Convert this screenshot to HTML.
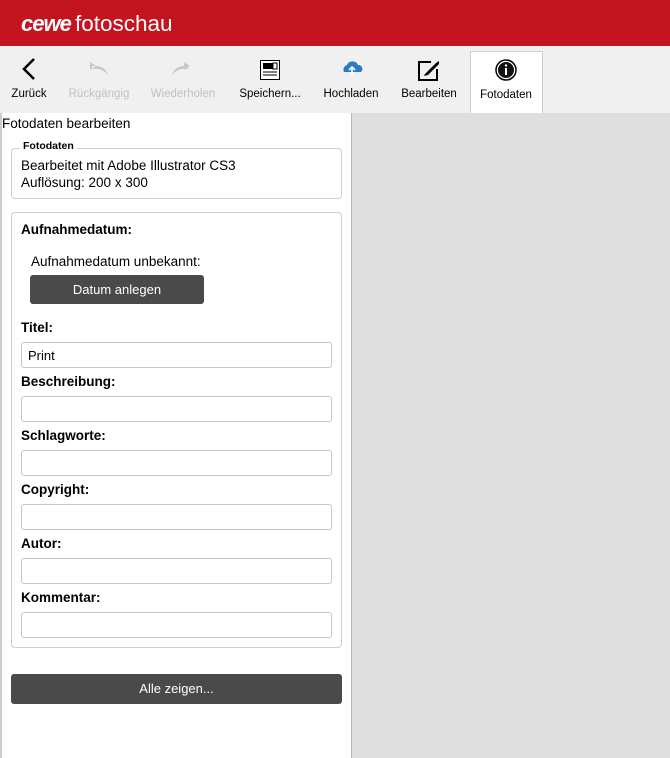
<!DOCTYPE html>
<html><head><meta charset="utf-8"><style>
*{box-sizing:border-box;margin:0;padding:0}
body{width:670px;height:758px;overflow:hidden;background:#dedede;font-family:"Liberation Sans",Arial,sans-serif;color:#000;position:relative}
.a{position:absolute}
#hdr{left:0;top:0;width:670px;height:46px;background:#c4141f}
#tb{left:0;top:46px;width:670px;height:67px;background:#f0f0f0}
.tl{position:absolute;top:88px;font-size:11.5px;text-align:center;width:90px}
.dis{color:#c0c0c0}
#left{left:0;top:113px;width:352px;height:645px;background:#fff;border-left:2px solid #ccc;border-right:1px solid #b5b5b5}
.box{position:absolute;left:11px;width:331px;border:1px solid #cfcfcf;border-radius:4px}
.lbl{position:absolute;left:21px;font-size:13.5px;font-weight:bold}
.in{position:absolute;left:21px;width:311px;height:26px;border:1px solid #c6c6c6;border-radius:3px;background:#fff;font-size:13px;padding:5px 6px}
.btn{position:absolute;background:#4a4a4a;color:#fff;font-size:13px;text-align:center;border-radius:3px}
</style></head><body>
<div id="hdr" class="a"></div>
<div class="a" style="left:21px;top:11px;color:#fff;font-size:22px;font-style:italic;font-weight:bold;letter-spacing:-1px">cewe</div>
<div class="a" style="left:75px;top:11px;color:#fff;font-size:22.5px">fotoschau</div>
<div id="tb" class="a"></div>
<div class="a" style="left:470px;top:51px;width:73px;height:62px;background:#fff;border:1px solid #cfcfcf;border-bottom:none"></div>
<svg class="a" style="left:0;top:55px" width="670" height="30">
<path d="M34 4 L24 14 L34 24" fill="none" stroke="#000" stroke-width="2.5"/>
<path d="M96 11 L90 7 L90 15 Z M92 11 C100 10 106 13 108 20 C104 15 99 13 92 14Z" fill="#c6c6c6"/>
<path d="M190 11 L184 7 L184 15 Z M188 11 C180 10 174 13 172 20 C176 15 181 13 188 14Z" fill="#c6c6c6"/>
<rect x="260.5" y="5.5" width="19" height="19" fill="#fff" stroke="#000"/>
<rect x="263" y="8" width="10" height="6" fill="#000"/><rect x="273" y="8" width="4" height="6" fill="none" stroke="#000"/>
<path d="M263 17h14M263 20h14" stroke="#000"/>
<path d="M344 17 a5 5 0 0 1 3-7 a6 6 0 0 1 11 0 a4 4 0 0 1 3 7Z" fill="#2b7ac9"/>
<path d="M352 20v-7M349 15l3-3 3 3" stroke="#fff" stroke-width="1.6" fill="none"/>
<path d="M431 7 H419 V25 H437 V14" fill="none" stroke="#000" stroke-width="2"/>
<path d="M425 19 L436 8 L439 6 L439 9 L428 20 L424 21Z" fill="#000"/>
<circle cx="506" cy="15" r="10" fill="#fff" stroke="#000" stroke-width="1.5"/>
<circle cx="506" cy="15" r="8" fill="#111"/>
<rect x="505" y="13" width="2" height="7" fill="#fff"/><circle cx="506" cy="10.5" r="1.2" fill="#fff"/>
</svg>
<div class="tl" style="left:-16px">Zurück</div>
<div class="tl dis" style="left:54px">Rückgängig</div>
<div class="tl dis" style="left:138px">Wiederholen</div>
<div class="tl" style="left:225px">Speichern...</div>
<div class="tl" style="left:306px">Hochladen</div>
<div class="tl" style="left:384px">Bearbeiten</div>
<div class="tl" style="left:461px;top:89px">Fotodaten</div>
<div id="left" class="a"></div>
<div class="a" style="left:2px;top:116px;font-size:13.5px">Fotodaten bearbeiten</div>
<div class="box" style="top:148px;height:51px"></div>
<div class="a" style="left:20px;top:140px;background:#fff;padding:0 3px;font-size:10.5px;font-weight:bold">Fotodaten</div>
<div class="a" style="left:21px;top:157px;font-size:13.5px;line-height:17px">Bearbeitet mit Adobe Illustrator CS3<br>Auflösung: 200 x 300</div>
<div class="box" style="top:212px;height:436px"></div>
<div class="lbl" style="top:222px">Aufnahmedatum:</div>
<div class="a" style="left:31px;top:254px;font-size:13.5px">Aufnahmedatum unbekannt:</div>
<div class="btn" style="left:30px;top:275px;width:174px;height:29px;line-height:29px">Datum anlegen</div>
<div class="lbl" style="top:320px">Titel:</div>
<div class="in" style="top:342px">Print</div>
<div class="lbl" style="top:374px">Beschreibung:</div>
<div class="in" style="top:396px"></div>
<div class="lbl" style="top:428px">Schlagworte:</div>
<div class="in" style="top:450px"></div>
<div class="lbl" style="top:482px">Copyright:</div>
<div class="in" style="top:504px"></div>
<div class="lbl" style="top:536px">Autor:</div>
<div class="in" style="top:558px"></div>
<div class="lbl" style="top:590px">Kommentar:</div>
<div class="in" style="top:612px"></div>
<div class="btn" style="left:11px;top:674px;width:331px;height:30px;line-height:30px">Alle zeigen...</div>
</body></html>
